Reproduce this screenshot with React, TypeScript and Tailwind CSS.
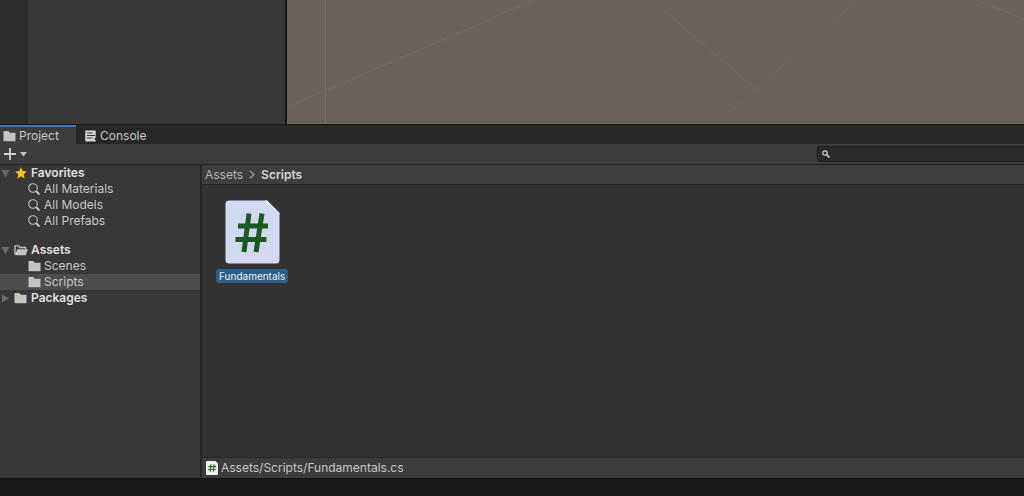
import { useState } from "react"
import clsx from "clsx"

const FAVORITES = ["All Materials", "All Models", "All Prefabs"]
const FOLDERS = ["Scenes", "Scripts"]

function FolderIcon({ className }: { className?: string }) {
  return (
    <svg viewBox="0 0 13 12" className={clsx("h-3 w-[13px] shrink-0", className)} fill="#c4c4c4" aria-hidden="true">
      <path d="M.5 1.500Q.5 1 1 1h4.200q.4 0 .6.4L6.800 2.800H12q.5 0 .5.5v7.500q0 .5-.5.5H1q-.5 0-.5-.5z" />
    </svg>
  )
}

function OpenFolderIcon() {
  return (
    <svg viewBox="0 0 14 12" className="h-3 w-[14px] shrink-0" aria-hidden="true">
      <path d="M1 10.500V1.800h3.800l1.200 1.700h5.500V5" fill="none" stroke="#c4c4c4" strokeWidth="1.300" />
      <path d="M3.400 5.200h10.400l-2 6H.7z" fill="#c4c4c4" />
    </svg>
  )
}

function ConsoleIcon() {
  return (
    <svg viewBox="0 0 11 12" className="h-3 w-[11px] shrink-0" aria-hidden="true">
      <path d="M.3.5h10.400v7L9.300 9l1.400 1.200v1.300H.3z" fill="#d6d6d6" />
      <path d="M2 3h5.500M2 5.500h8M2 8h5.500" stroke="#383838" strokeWidth="1.100" />
    </svg>
  )
}

function LensIcon() {
  return (
    <svg viewBox="0 0 12 12" className="h-3 w-3 shrink-0" fill="none" stroke="#c4c4c4" aria-hidden="true">
      <circle cx="5" cy="5" r="4.300" strokeWidth="1.100" />
      <path d="M8 8l3.400 3.600" strokeWidth="1.900" />
    </svg>
  )
}

function StarIcon() {
  return (
    <svg viewBox="0 0 12 12" className="h-3 w-3 shrink-0" fill="#fcc70f" aria-hidden="true">
      <path d="M6 .3l1.700 3.800 4.100.4-3.100 2.800.9 4.200L6 9.300l-3.600 2.200.9-4.200L.2 4.500l4.100-.4z" />
    </svg>
  )
}

function Arrow({ open }: { open?: boolean }) {
  return (
    <svg viewBox="0 0 9 9" className="h-[9px] w-[9px] shrink-0" fill="#696969" aria-hidden="true">
      <path d={open ? "M.5 1h8L4.500 8.500z" : "M1 .5v8l7-4z"} />
    </svg>
  )
}

function ScriptIcon({ className }: { className?: string }) {
  return (
    <svg viewBox="0 0 55 64" className={className} aria-hidden="true">
      <path d="M4 .5h38L54.500 13v47q0 3.500-3.500 3.500H4Q.5 63.500.5 60V4Q.5.5 4 .5z" fill="#d0d9f0" />
      <path d="M42 .5L54.500 13v1.500L40 .5z" fill="#f0f3fb" />
      <path d="M24 13.500L19 52M37 13.500L31 52M13 26h30M10.500 39.500h31" stroke="#1b5b21" strokeWidth="5" fill="none" />
    </svg>
  )
}

// small badge version used in the path bar
function ScriptBadge() {
  return (
    <svg viewBox="0 0 12 14" className="h-[14px] w-3 shrink-0" aria-hidden="true">
      <path d="M1 0h8.500L12 2.500V13q0 1-1 1H1q-1 0-1-1V1q0-1 1-1z" fill="#edf0ee" />
      <path d="M5 3.200l-.8 7.600M8.200 3.200l-.8 7.600M2.300 5.600h7.700M2 8.500h7.700" stroke="#2a6a35" strokeWidth="1.200" fill="none" />
    </svg>
  )
}

function SceneView() {
  return (
    <div className="min-w-0 flex-1 border-b border-[#77706b] bg-[#6a615c]">
      <svg viewBox="0 0 737 123" preserveAspectRatio="none" className="h-full w-full" fill="none" stroke="#78706a" aria-hidden="true">
        <path d="M38.500 0v123" opacity=".7" />
        <path d="M0 107L40 90L130 51L190 25L246 0" opacity=".6" />
        <path d="M374 8L469 89L500 119" opacity=".5" />
        <path d="M571 0L469 89L436 118" opacity=".4" />
        <path d="M690 0L737 19" opacity=".6" />
      </svg>
    </div>
  )
}

export default function App() {
  const [selected, setSelected] = useState("Scripts")
  const [query, setQuery] = useState("")

  return (
    <div className="flex min-h-screen flex-col bg-[#191919] font-['Inter',sans-serif] text-xs leading-4 text-[#c8c8c8]">
      <div className="flex h-[125px] border-b border-[#151515] bg-[#383838]">
        <div className="w-7 shrink-0 bg-[#2d2d2d]" />
        <div className="w-[257px] shrink-0" />
        <div className="w-[2px] shrink-0 bg-[#171717]" />
        <SceneView />
      </div>

      <div className="flex h-[19px] bg-[#282828]" role="tablist">
        <button role="tab" aria-selected="true" className="flex w-[76px] items-center gap-[3px] border-t-2 border-[#3a79bb] bg-[#3c3c3c] pl-[3px]">
          <FolderIcon />
          Project
        </button>
        <button role="tab" aria-selected="false" className="flex items-center gap-1 border-t-2 border-transparent pr-2 pl-[9px]">
          <ConsoleIcon />
          Console
        </button>
      </div>

      <div className="flex h-[21px] items-center justify-between border-b border-[#232323] bg-[#3c3c3c]">
        <button aria-label="Create" className="flex items-center gap-1 pl-1">
          <svg viewBox="0 0 12 12" className="h-3 w-3" stroke="#d2d2d2" strokeWidth="1.800" aria-hidden="true">
            <path d="M6 0v12M0 6h12" />
          </svg>
          <svg viewBox="0 0 7 5" className="h-[5px] w-[7px]" fill="#c4c4c4" aria-hidden="true">
            <path d="M0 0h7L3.500 4.500z" />
          </svg>
        </button>
        <label className="flex h-4 w-[207px] items-center rounded-l-[4px] border border-r-0 border-[#1c1c1c] bg-[#2a2a2a] pl-1">
          <svg viewBox="0 0 8 8" className="h-2 w-2 shrink-0" fill="none" stroke="#d2d2d2" aria-hidden="true">
            <circle cx="3" cy="3" r="2.200" strokeWidth="1.200" />
            <path d="M4.600 4.600L7.500 7.500" strokeWidth="1.500" />
          </svg>
          <input
            type="text"
            aria-label="Search assets"
            value={query}
            onChange={(e) => setQuery(e.target.value)}
            className="min-w-0 flex-1 bg-transparent px-1 outline-none"
          />
        </label>
      </div>

      <div className="flex flex-1">
        <nav className="flex w-[202px] shrink-0 flex-col gap-[13px] border-r-2 border-[#262626] bg-[#383838]">
          <div>
            <button className="flex h-4 w-full items-center gap-[3px] pl-px font-semibold text-[#e0e0e0]">
              <Arrow open />
              <span className="flex w-[15px] justify-center"><StarIcon /></span>
              Favorites
            </button>
            {FAVORITES.map((name) => (
              <button key={name} className="flex h-4 w-full items-center gap-1 pl-7">
                <LensIcon />
                {name}
              </button>
            ))}
          </div>
          <div>
            <button className="flex h-4 w-full items-center gap-[3px] pl-px font-semibold text-[#e0e0e0]">
              <Arrow open />
              <span className="flex w-[15px] justify-center"><OpenFolderIcon /></span>
              Assets
            </button>
            {FOLDERS.map((name) => (
              <button
                key={name}
                onClick={() => setSelected(name)}
                className={clsx("flex h-4 w-full items-center gap-[3px] pl-7", selected === name && "bg-[#4d4d4d]")}
              >
                <FolderIcon />
                {name}
              </button>
            ))}
            <button className="flex h-4 w-full items-center gap-[3px] pl-px font-semibold text-[#e0e0e0]">
              <Arrow />
              <span className="flex w-[15px] justify-center"><FolderIcon /></span>
              Packages
            </button>
          </div>
        </nav>

        <main className="flex min-w-0 flex-1 flex-col bg-[#333333]">
          <div className="flex h-5 items-center gap-[6px] border-b border-[#272727] bg-[#3e3e3e] pl-[3px]">
            <a href="#assets" className="text-[#b4b4b4]">Assets</a>
            <svg viewBox="0 0 6 9" className="h-[9px] w-[6px]" fill="none" stroke="#a0a0a0" strokeWidth="1.200" aria-hidden="true">
              <path d="M.8.8l4.200 3.700L.8 8.200" />
            </svg>
            <a href="#scripts" className="font-semibold text-[#d6d6d6]">Scripts</a>
          </div>

          <div className="flex flex-1 items-start pt-[15px] pl-[14px]">
            <button className="flex flex-col items-center gap-[5px]">
              <ScriptIcon className="h-16 w-[55px]" />
              <span className="rounded-[3px] bg-[#2c5d87] px-[3px] text-[10px] leading-[14px] text-[#eef3f8]">Fundamentals</span>
            </button>
          </div>

          <div className="flex h-[21px] items-center gap-[3px] border-t border-[#272727] bg-[#3c3c3c] pl-1">
            <ScriptBadge />
            Assets/Scripts/Fundamentals.cs
          </div>
        </main>
      </div>

      <footer className="h-[18px] border-t border-[#121212] bg-[#191919]" />
    </div>
  )
}
